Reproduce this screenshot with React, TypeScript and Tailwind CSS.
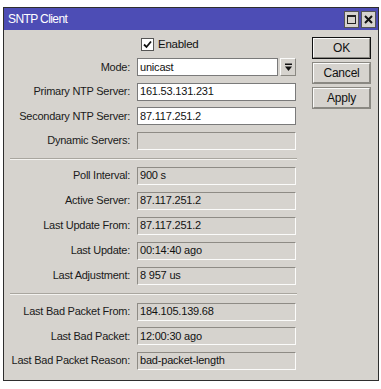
import React from "react";

const font = { fontFamily: '"Liberation Sans", Arial, sans-serif' };

function Sep() {
  return <div className="ml-[6px] w-[287px] h-[2px] border-t border-[#a9a69f] border-b border-b-[#f4f3f0]" />;
}

function Row({ label, children }: { label: string; children: React.ReactNode }) {
  return (
    <div className="flex items-center h-[18px]">
      <div className="w-[127px] text-right pr-[1px] text-[11px] tracking-[-0.25px] text-[#1a1a1a] whitespace-nowrap">{label}</div>
      <div className="ml-[6px] w-[159px] h-[18px]">{children}</div>
    </div>
  );
}

function Edit({ value }: { value: string }) {
  return (
    <div className="w-full h-full bg-white border border-[#7a7a7a] px-[2px] flex items-center text-[11px] tracking-[-0.2px] text-[#111]">{value}</div>
  );
}

function RO({ value }: { value: string }) {
  return (
    <div className="w-full h-full bg-[#d6d3ce] border border-t-[#8e8b85] border-l-[#8e8b85] border-r-[#fbfbfa] border-b-[#fbfbfa] px-[2px] flex items-center text-[11px] tracking-[-0.2px] text-[#111]">
      {value}
    </div>
  );
}

function Btn({ label, def }: { label: string; def?: boolean }) {
  return (
    <div className={`w-[59px] h-[22px] ${def ? "border border-[#111]" : "border border-[#8a8882]"} bg-[#d6d3ce]`}>
      <div className="w-full h-full border border-t-[#fbfbfa] border-l-[#fbfbfa] border-r-[#8a8882] border-b-[#8a8882] flex items-center justify-center text-[12px] tracking-[-0.2px] text-[#111]">
        {label}
      </div>
    </div>
  );
}

export default function App() {
  return (
    <div className="w-[381px] h-[389px] bg-white pt-[7px] pl-[3px]" style={font}>
      <div className="w-[376px] h-[374px] border border-[#2e2e2e] flex flex-col bg-[#d6d3ce]">
        <div className="h-[22px] bg-[#4d4db5] flex items-center justify-between pl-[4px] pr-[2px]">
          <span className="text-white text-[12px] tracking-[-0.6px]">SNTP Client</span>
          <div className="flex gap-[2px]">
            <div className="w-[15px] h-[17px] bg-[#d6d3ce] border border-[#555] flex items-center justify-center">
              <div className="w-[9px] h-[9px] border border-[#222] border-t-2" />
            </div>
            <div className="w-[15px] h-[17px] bg-[#d6d3ce] border border-[#555] flex items-center justify-center">
              <svg width="9" height="9" viewBox="0 0 9 9">
                <path d="M1 1 L8 8 M8 1 L1 8" stroke="#111" strokeWidth="2" />
              </svg>
            </div>
          </div>
        </div>
        <div className="flex flex-1">
          <div className="w-[308px] flex flex-col">
            <div className="h-[8px]" />
            <div className="flex items-center h-[13px] ml-[137px]">
              <div className="w-[13px] h-[13px] bg-white border border-[#555] flex items-center justify-center">
                <svg width="9" height="9" viewBox="0 0 9 9">
                  <path d="M1 4.5 L3.5 7 L8 1.5" stroke="#111" strokeWidth="1.8" fill="none" />
                </svg>
              </div>
              <span className="ml-[4px] text-[11.5px] tracking-[-0.25px] text-[#111]">Enabled</span>
            </div>
            <div className="h-[7px]" />
            <div className="flex flex-col gap-[6.5px]">
              <div className="flex items-center h-[18px]">
                <div className="w-[127px] text-right pr-[1px] text-[11px] tracking-[-0.25px] text-[#1a1a1a]">Mode:</div>
                <div className="ml-[6px] w-[141px] h-[18px]"><Edit value="unicast" /></div>
                <div className="ml-[2px] w-[16px] h-[18px] bg-[#d6d3ce] border border-t-[#fbfbfa] border-l-[#fbfbfa] border-r-[#8a8882] border-b-[#8a8882] flex items-center justify-center">
                  <svg width="9" height="9" viewBox="0 0 9 9">
                    <rect x="1" y="0.5" width="7" height="1.5" fill="#111" />
                    <path d="M1 3.5 H8 L4.5 8 Z" fill="#111" />
                  </svg>
                </div>
              </div>
              <Row label="Primary NTP Server:"><Edit value="161.53.131.231" /></Row>
              <Row label="Secondary NTP Server:"><Edit value="87.117.251.2" /></Row>
              <Row label="Dynamic Servers:"><RO value="" /></Row>
            </div>
            <div className="h-[8px]" />
            <Sep />
            <div className="h-[7px]" />
            <div className="flex flex-col gap-[7px]">
              <Row label="Poll Interval:"><RO value="900 s" /></Row>
              <Row label="Active Server:"><RO value="87.117.251.2" /></Row>
              <Row label="Last Update From:"><RO value="87.117.251.2" /></Row>
              <Row label="Last Update:"><RO value="00:14:40 ago" /></Row>
              <Row label="Last Adjustment:"><RO value="8 957 us" /></Row>
            </div>
            <div className="h-[8px]" />
            <Sep />
            <div className="h-[8px]" />
            <div className="flex flex-col gap-[6.5px]">
              <Row label="Last Bad Packet From:"><RO value="184.105.139.68" /></Row>
              <Row label="Last Bad Packet:"><RO value="12:00:30 ago" /></Row>
              <Row label="Last Bad Packet Reason:"><RO value="bad-packet-length" /></Row>
            </div>
          </div>
          <div className="flex flex-col gap-[3px] pt-[7px]">
            <Btn label="OK" def />
            <Btn label="Cancel" />
            <Btn label="Apply" />
          </div>
        </div>
      </div>
    </div>
  );
}
